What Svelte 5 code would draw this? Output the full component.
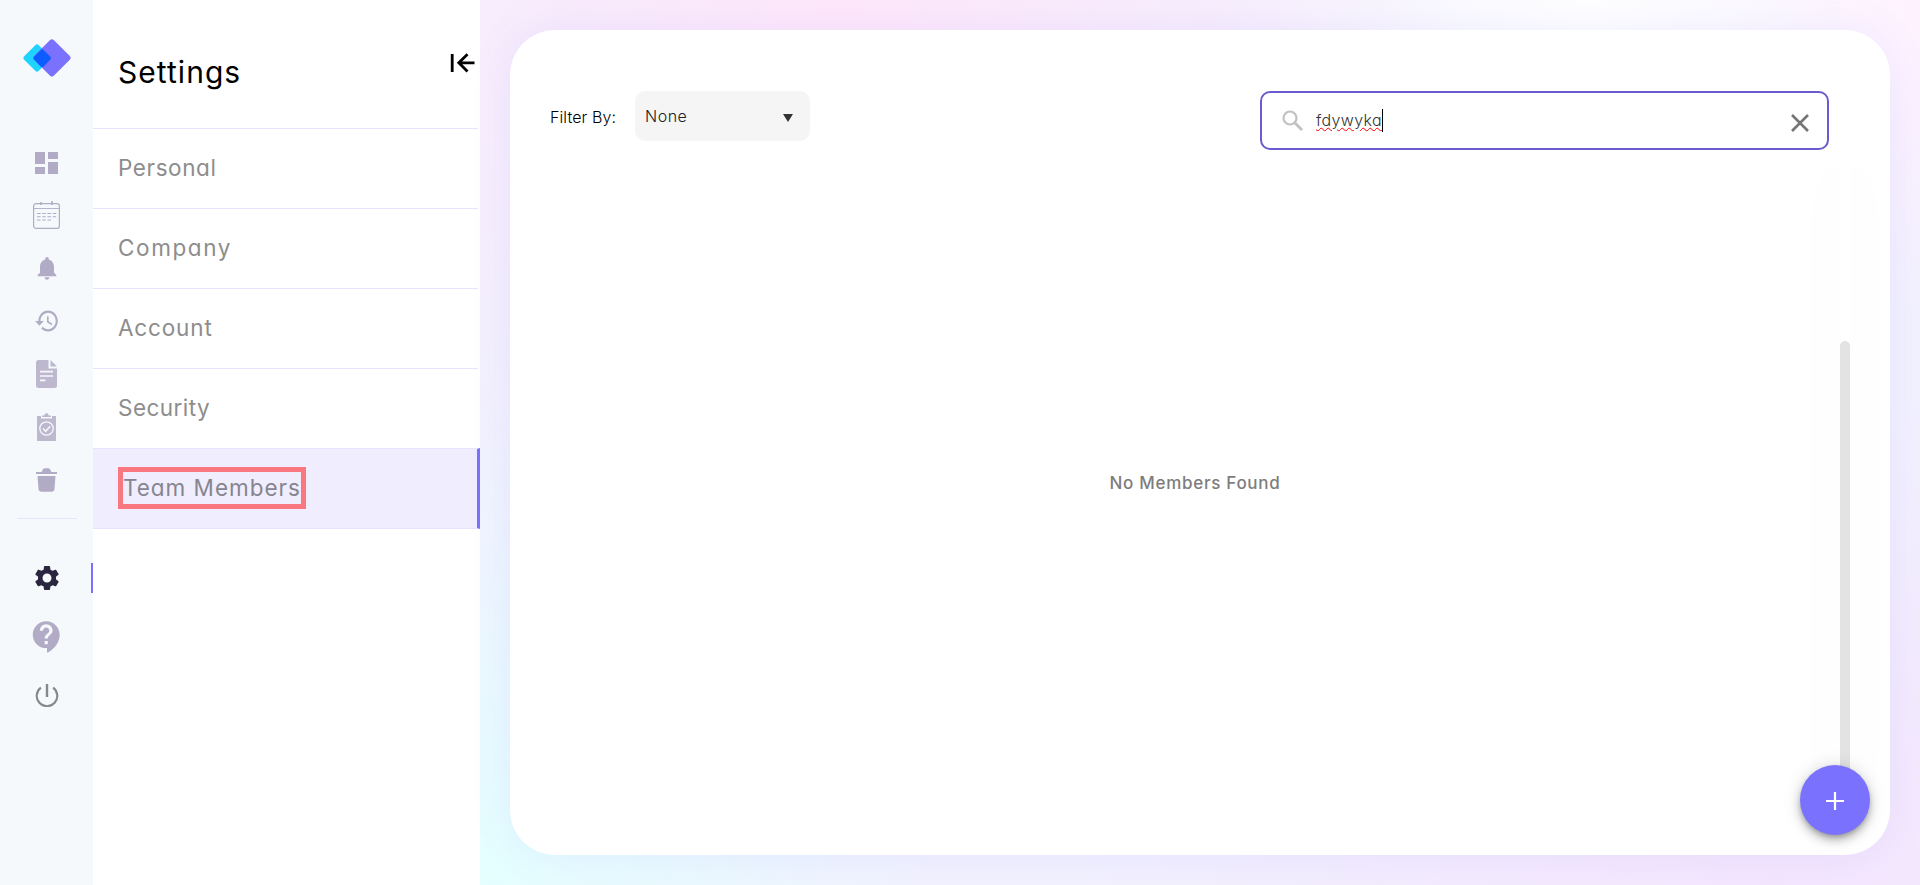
<script>
  const items = [
    { label: 'Personal', tracking: 0.6 },
    { label: 'Company', tracking: 1.6 },
    { label: 'Account', tracking: 0.85 },
    { label: 'Security', tracking: 0.45 },
    { label: 'Team Members', tracking: 0.98 }
  ];
  const active = 'Team Members';
</script>

<div class="app">
  <aside class="rail">
    <svg class="logo" width="48" height="38" viewBox="0 0 48 38">
      <rect x="3.700" y="8.700" width="20.600" height="20.600" rx="2.500" transform="rotate(45 14 19)" fill="#1fd3ff" />
      <rect x="14.900" y="4.900" width="28" height="28" rx="3" transform="rotate(45 28.900 18.900)" fill="#7a72ff" />
      <rect x="12.400" y="12.400" width="13.600" height="13.600" rx="2" transform="rotate(45 19.200 19.200)" fill="#0d5cff" />
    </svg>
    <nav class="main-nav">
      <a class="slot" href="#dashboard" aria-label="Dashboard">
        <svg width="23" height="22" viewBox="0 0 23 22" fill="#b2abc5"><path d="M0 0h10v12H0zM0 15h10v7H0zM13 0h10v7H13zM13 10h10v12H13z" /></svg>
      </a>
      <a class="slot raised" href="#calendar" aria-label="Calendar">
        <svg width="27" height="28" viewBox="0 0 27 28" fill="none" stroke="#b2abc5">
          <rect x=".6" y="2.600" width="25.800" height="24.800" rx="2.500" stroke-width="1.200" />
          <path d="M1 7.500h25" stroke-width=".9" /><path d="M8 1v3M19 0v4" stroke-width="1.600" />
          <path d="M4 12.500h20M4 15.700h20M4 19h15" stroke-width="1.100" stroke-dasharray="3.600 1.600" />
        </svg>
      </a>
      <a class="slot" href="#alerts" aria-label="Alerts">
        <svg width="28" height="28" viewBox="0 0 24 24" fill="#b2abc5"><path d="M12 22c1.100 0 2-.9 2-2h-4c0 1.100.89 2 2 2zm6-6v-5c0-3.070-1.640-5.640-4.500-6.320V4c0-.83-.67-1.500-1.500-1.500s-1.500.67-1.500 1.500v.68C7.630 5.360 6 7.920 6 11v5l-2 2v1h16v-1l-2-2z" /></svg>
      </a>
      <a class="slot" href="#history" aria-label="History">
        <svg width="26" height="28" viewBox="0 0 24 24" preserveAspectRatio="none" fill="#b2abc5"><path d="M13 3c-4.970 0-9 4.030-9 9H1l3.890 3.890.07.14L9 12H6c0-3.870 3.130-7 7-7s7 3.130 7 7-3.130 7-7 7c-1.930 0-3.680-.79-4.940-2.060l-1.420 1.420C8.270 19.990 10.510 21 13 21c4.970 0 9-4.030 9-9s-4.030-9-9-9zm-1 5v5l4.280 2.540.72-1.210-3.500-2.080V8H12z" /></svg>
      </a>
      <a class="slot" href="#documents" aria-label="Documents">
        <svg width="21" height="28" viewBox="0 0 21 28">
          <path d="M2.500 0H12.500v8.500H21V25.500a2.500 2.500 0 0 1-2.500 2.500h-16A2.500 2.500 0 0 1 0 25.500v-23A2.500 2.500 0 0 1 2.500 0zM14.500 0 21 6.500h-6.500z" fill="#beb8cf" />
          <path d="M4 11.700h13M4 16h13M4 20.300h5.500" stroke="#f5f9fc" stroke-width="1.700" />
        </svg>
      </a>
      <a class="slot" href="#tasks" aria-label="Tasks">
        <svg width="19" height="28" viewBox="0 0 19 28">
          <path d="M0 3h4v2.500h11V3h4v25H0z" fill="#beb8cf" /><path d="M5 4V2.500h2.300Q7.500 0 9.500 0t2.200 2.500H14V4z" fill="#beb8cf" />
          <circle cx="9.500" cy="15.500" r="6.700" fill="none" stroke="#f5f9fc" stroke-width="1.300" />
          <path d="m6 15.500 2.700 2.800 4.500-5" fill="none" stroke="#f5f9fc" stroke-width="1.500" />
        </svg>
      </a>
      <a class="slot" href="#trash" aria-label="Trash">
        <svg width="21" height="24" viewBox="0 0 21 24" fill="#b2abc5"><path d="M0 4h5.500L7 1.200Q7.700.3 8.500.3h4q.9 0 1.500.9L15.500 4H21v2H0zM1.500 8h18l-1 13q-.3 2.700-3 2.700h-10q-2.700 0-3-2.700z" /></svg>
      </a>
    </nav>
    <hr />
    <nav class="sub-nav">
      <a class="slot current" href="#settings" aria-label="Settings">
        <svg width="30" height="30" viewBox="0 0 24 24" fill="#2b2640"><path d="M19.140 12.940c.04-.3.06-.61.06-.94 0-.32-.02-.64-.07-.94l2.030-1.580c.18-.14.23-.41.12-.61l-1.920-3.320c-.12-.22-.37-.29-.59-.22l-2.390.96c-.5-.38-1.030-.7-1.620-.94l-.36-2.540c-.04-.24-.24-.41-.48-.41h-3.840c-.24 0-.43.17-.47.41l-.36 2.540c-.59.24-1.130.57-1.620.94l-2.390-.96c-.22-.08-.47 0-.59.22L2.740 8.870c-.12.21-.08.47.12.61l2.030 1.580c-.05.3-.09.63-.09.94s.02.64.07.94l-2.030 1.580c-.18.14-.23.41-.12.61l1.920 3.320c.12.22.37.29.59.22l2.390-.96c.5.38 1.030.7 1.620.94l.36 2.540c.05.24.24.41.48.41h3.840c.24 0 .44-.17.47-.41l.36-2.540c.59-.24 1.130-.56 1.620-.94l2.390.96c.22.08.47 0 .59-.22l1.920-3.320c.12-.22.07-.47-.12-.61l-2.010-1.580zM12 15.600c-1.980 0-3.600-1.620-3.600-3.600s1.620-3.600 3.600-3.600 3.600 1.620 3.600 3.600-1.620 3.600-3.600 3.600z" /></svg>
      </a>
      <a class="slot" href="#help" aria-label="Help">
        <svg width="38" height="38" viewBox="0 0 24 24" fill="#b2abc5"><path d="M11.500 2C6.810 2 3 5.810 3 10.500S6.810 19 11.500 19h.5v3c4.860-2.340 8-7 8-11.500C20 5.810 16.190 2 11.500 2zm1 14.500h-2v-2h2v2zm0-3.500h-2c0-3.250 3-3 3-5 0-1.100-.9-2-2-2s-2 .9-2 2h-2c0-2.210 1.790-4 4-4s4 1.790 4 4c0 2.500-3 2.750-3 5z" /></svg>
      </a>
      <a class="slot raised" href="#logout" aria-label="Log out">
        <svg width="24" height="24" viewBox="0 0 24 24" fill="none" stroke="#888" stroke-width="2.100"><path d="M12 1v13" stroke-width="2.400" /><path d="M5.900 4.600a10.300 10.300 0 1 0 12.200 0" /></svg>
      </a>
    </nav>
  </aside>

  <section class="panel">
    <header>
      <h1>Settings</h1>
      <svg width="25" height="20" viewBox="0 0 25 20" fill="none" stroke="#000" stroke-width="2.800"><path d="M2.200 1v18M24.500 9.800H9M17.500 1.200 8.800 9.800l8.700 8.700" /></svg>
    </header>
    {#each items as item}
      <a class="item" class:active={item.label === active} href="#{item.label}"><span style="letter-spacing: {item.tracking}px">{item.label}</span></a>
    {/each}
  </section>

  <main>
    <div class="card">
      <div class="toolbar">
        <span class="filter">Filter By:</span>
        <div class="select"><span>None</span><svg width="10" height="8" viewBox="0 0 10 8"><path d="M0 0h10L5 8z" fill="#333" /></svg></div>
        <div class="search">
          <svg width="21" height="21" viewBox="0 0 21 21" fill="none" stroke="#c1c1c1"><circle cx="8" cy="8" r="6.500" stroke-width="2.200" /><path d="m13 13 7 7" stroke-width="2.800" /></svg>
          <span class="query">fdywyka</span><i class="caret"></i>
          <svg class="clear" width="18" height="18" viewBox="0 0 18 18" fill="none" stroke="#757575" stroke-width="2.600"><path d="m1 1 16 16M17 1 1 17" /></svg>
        </div>
      </div>
      <div class="results"><p>No Members Found</p></div>
      <div class="track"><div class="thumb"></div></div>
      <button class="fab" aria-label="Add member"><svg width="18" height="18" viewBox="0 0 18 18" stroke="#fff" stroke-width="2.200"><path d="M9 0v18M0 9h18" /></svg></button>
    </div>
  </main>
</div>

<style>
  :global(body) { margin: 0; overflow: hidden; }
  .app { display: flex; width: 100vw; height: 885px; font-family: Inter, "Open Sans", sans-serif; font-feature-settings: "cv11"; background: #fff; }
  a { color: inherit; text-decoration: none; }
  svg { display: block; flex: none; }
  .rail { box-sizing: border-box; width: 93px; height: 100%; padding-top: 38.500px; background: #f5f9fc; flex: none; }
  .logo { margin-left: 23px; }
  .main-nav { margin-top: 60px; }
  .slot { display: flex; align-items: center; justify-content: center; height: 52.800px; }
  .raised svg { margin-bottom: 2px; }
  hr { width: 60px; height: 1px; margin: 12px 0 0 17px; border: 0; background: #e8e4ff; }
  .sub-nav { margin-top: 29.500px; }
  .sub-nav .slot { height: 59px; }
  .current { background: linear-gradient(#7a72ff, #7a72ff) right center / 2px 30px no-repeat; }
  .panel { width: 387px; flex: none; background: #fff; }
  header { box-sizing: border-box; display: flex; justify-content: space-between; align-items: flex-start; height: 128px; padding: 52px 5px 0 25px; }
  header svg { margin-top: 1px; }
  h1 { margin: 0; font-size: 30px; line-height: 40px; font-weight: 400; letter-spacing: 1.050px; color: #000; }
  .item { box-sizing: border-box; display: flex; align-items: center; height: 80px; padding-left: 25px; font-size: 22.500px; line-height: 32px; color: #8d8d8d; background: linear-gradient(#e8e4ff, #e8e4ff) 0 0 / 385px 1px no-repeat; }
  .item.active { height: 81px; border-top: 1px solid #e8e4ff; border-bottom: 1px solid #e8e4ff; border-right: 3px solid #7b72ff; color: #86858f; background: #efedfe; }
  .active span { margin-bottom: 1px; border: 5px solid #f97880; }
  main { box-sizing: border-box; flex: 1; padding: 30px;
    background:
      radial-gradient(ellipse 460px 460px at 0% 100%, #e4ffff 0%, #e4ffff00 100%),
      radial-gradient(ellipse 620px 520px at 25% 0%, #fee7fa 0%, #fee7fa00 100%),
      radial-gradient(ellipse 380px 220px at 77% 0%, #ffffff 0%, #ffffff00 100%),
      radial-gradient(ellipse 300px 320px at 100% 0%, #fff0ff 0%, #fff0ff00 100%),
      radial-gradient(ellipse 700px 500px at 90% 100%, #f4e5fd 0%, #f4e5fd00 100%),
      #f2f1fe; }
  .card { position: relative; box-sizing: border-box; height: 825px; padding: 61px 61px 0 40px; border-radius: 45px; background: #fff; box-shadow: 0 0 40px rgba(122,114,255,.1); }
  .toolbar { display: flex; align-items: flex-start; height: 59px; }
  .filter { width: 85px; font-size: 16px; line-height: 52px; color: #000; font-weight: 300; letter-spacing: .1px; }
  .select { box-sizing: border-box; display: flex; align-items: center; justify-content: space-between; width: 175px; height: 50px; padding: 0 17px 0 10px; border-radius: 10px; background: #f5f5f5; color: #222; font-size: 16px; font-weight: 300; letter-spacing: .5px; }
  .select svg { margin-top: 4px; }
  .search { box-sizing: border-box; display: flex; align-items: center; width: 569px; height: 59px; margin-left: auto; padding: 0 18px 0 20px; border: 2px solid #6a5bd0; border-radius: 10px; }
  .query { margin: 0 0 2px 13px; font-size: 16px; font-weight: 300; letter-spacing: .35px; color: #333; text-decoration: underline wavy #f00 1px; }
  .caret { width: 1px; height: 23px; background: #000; }
  .clear { margin: 5px 0 0 auto; }
  .results { display: flex; justify-content: center; padding-top: 321px; }
  .results p { margin: 0 0 0 11px; font-size: 17px; line-height: 24px; font-weight: 500; letter-spacing: .7px; color: #7d7d7d; }
  .track { position: absolute; left: 1330px; top: 130px; width: 10px; height: 650px; border-radius: 5px; background: #fff; box-shadow: 0 0 60px rgba(122,114,255,.05); }
  .thumb { height: 469px; border-radius: 5px; background: #e3e3e3; transform: translateY(181px); }
  .fab { position: absolute; right: 20px; bottom: 20px; display: flex; align-items: center; justify-content: center; width: 70px; height: 70px; padding: 2px 0 0; border: 0; border-radius: 50%; background: #7a72ff; box-shadow: 0 3px 5px -1px rgba(0,0,0,.22), 0 6px 10px rgba(0,0,0,.18), 0 1px 18px rgba(0,0,0,.15); }
</style>
